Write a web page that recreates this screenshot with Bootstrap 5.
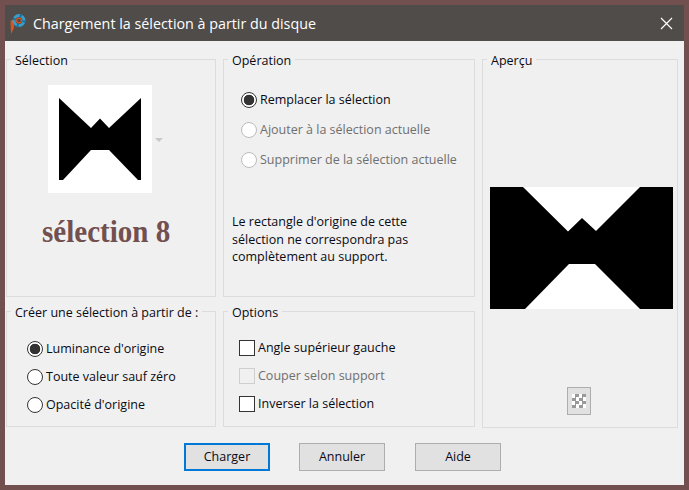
<!DOCTYPE html>
<html lang="fr">
<head>
  <meta charset="UTF-8" />
  <meta name="viewport" content="width=device-width, initial-scale=1" />
  <title>Chargement la sélection</title>
  <link href="https://cdn.jsdelivr.net/npm/bootstrap@5.3.3/dist/css/bootstrap.min.css" rel="stylesheet" />
  <style>
    body {
      background: #735050;
      margin: 0;
      font-family: "Open Sans", "Noto Sans", sans-serif;
      font-size: 12.5px;
      color: #0a0a14;
    }

    .dlg-window {
      width: 679px;
      height: 480px;
      margin: 5px;
      background: #f0f0f0;
    }

    .dlg-title {
      height: 36px;
      background: #4f4c4a;
      color: #fff;
      font-size: 14.3px;
      padding: 2px 0 0 5px;
    }

    .dlg-logo { margin-right: 7px; }
    .dlg-close { margin: -2px 11px 0 0; }

    .dlg-grid {
      display: grid;
      grid-template-columns: 210px 252px 196px;
      grid-template-rows: 247px 125px;
      column-gap: 7px;
      row-gap: 5px;
      padding: 9px 0 0 1px;
    }

    .grp {
      border: 1px solid #dcdcdc;
      min-width: 0;
      margin: 0;
      padding: 0;
    }

    .grp legend {
      float: none;
      width: auto;
      height: 18px;
      margin: 0 0 0 4px;
      padding: 0 4px;
      font-size: 12.5px;
      line-height: 21px;
    }

    .grp-preview { grid-column: 3; grid-row: 1 / span 2; margin-bottom: -1px; }

    .thumb-row { margin: 17px 0 0 41px; }
    .thumb-box { width: 104px; height: 108px; background: #fff; }
    .thumb-arrow {
      width: 0;
      height: 0;
      margin: 53px 0 0 3px;
      border-left: 4px solid transparent;
      border-right: 4px solid transparent;
      border-top: 4px solid #c8c8c8;
    }

    .sel-name {
      display: inline-block;
      margin: 19px 0 0 35px;
      font-family: "Liberation Serif", serif;
      font-weight: 700;
      font-size: 32px;
      line-height: 38px;
      color: #735050;
      white-space: nowrap;
      transform: scaleX(.908);
      transform-origin: left center;
    }

    .opt-list { display: flex; flex-direction: column; }
    .opt-list .form-check {
      display: flex;
      align-items: center;
      min-height: 0;
      margin: 0;
      padding: 0;
      height: 28px;
      gap: 3px;
    }
    .list-op { margin: 18px 0 0 17px; height: 90px; gap: 2px; }
    .list-src { margin: 15px 0 0 20px; }
    .list-opts { margin: 14px 0 0 15px; }

    .opt-list .form-check-input {
      float: none;
      flex: none;
      margin: 0;
      width: 16px;
      height: 16px;
      background-color: #fff;
      border: 1px solid #333;
      box-shadow: none;
    }
    .opt-list .form-check-input[type=radio] { border-radius: 50%; }
    .opt-list .form-check-input[type=checkbox] { border-radius: 0; }
    .opt-list .form-check-input:checked {
      background-color: #fff;
      border-color: #333;
      background-image: radial-gradient(circle, #333 0 5px, #fff 5.6px);
    }
    .opt-list .form-check-input:disabled {
      opacity: 1;
      border-color: #bcbcbc;
    }
    .opt-list .form-check-input[type=checkbox]:disabled { border-color: #cfcfcf; background-color: #f0f0f0; }
    .opt-list .form-check-label { opacity: 1; color: inherit; white-space: nowrap; }
    .opt-list .form-check-input:disabled ~ .form-check-label { opacity: 1; color: #6f6f6f; }

    .note-text {
      margin: 37px 0 0 8px;
      width: 200px;
      line-height: 17.5px;
    }

    .preview-box { width: 183px; height: 122px; margin: 119px 0 0 7px; background: #000; }
    .preview-btn {
      width: 24px;
      height: 28px;
      margin: 78px 0 0 84px;
      background: #e1e1e1;
      border: 1px solid #adadad;
    }
    .checker {
      width: 14px;
      height: 14px;
      background: repeating-conic-gradient(#999 0 25%, #fff 0 50%) 0 0 / 7px 7px;
    }

    .dlg-actions { padding: 16px 0 0 179px; gap: 29px; }
    .dlg-btn {
      width: 86px;
      height: 28px;
      padding: 1px 0 0;
      border-radius: 0;
      background: #e1e1e1;
      border: 1px solid #adadad;
      color: #0a0a14;
      font-size: 12.5px;
    }
    .dlg-btn-default { border: 2px solid #0078d7; }
    .dlg-btn-last { margin-left: 1px; }
  </style>
</head>
<body>

  <div class="dlg-window">
    <!-- Title bar -->
    <div class="dlg-title d-flex align-items-center">
      <svg class="dlg-logo flex-shrink-0" width="16" height="20" viewBox="0 0 16 20">
        <path d="M0.5 7 L4 4.5 L4 14 L1 20 Z" fill="#d9541e" />
        <circle cx="9" cy="6.5" r="5" fill="none" stroke="#37a0cc" stroke-width="3" />
        <circle cx="9" cy="6.5" r="5" fill="none" stroke="#1b6f9c" stroke-width="3" stroke-dasharray="2 5.9" />
        <circle cx="9" cy="6.5" r="2.4" fill="#4f4c4a" stroke="#d9541e" stroke-width="1.2" />
      </svg>
      <span class="flex-grow-1">Chargement la sélection à partir du disque</span>
      <svg class="dlg-close" width="13" height="13" viewBox="0 0 13 13">
        <path d="M1 1 L12 12 M12 1 L1 12" stroke="#fff" stroke-width="1.2" fill="none" />
      </svg>
    </div>

    <div class="dlg-grid">
      <fieldset class="grp">
        <legend>Sélection</legend>
        <div class="thumb-row d-flex">
          <div class="thumb-box">
            <svg width="104" height="108" viewBox="0 0 104 108" class="d-block">
              <polygon points="11,13 43,43 52,33.5 61,43 93,13 93,95 90,95 61,65 43,65 15,95 11,95" fill="#000" />
            </svg>
          </div>
          <div class="thumb-arrow"></div>
        </div>
        <div class="sel-name">sélection 8</div>
      </fieldset>

      <fieldset class="grp">
        <legend>Opération</legend>
        <div class="opt-list list-op">
          <div class="form-check">
            <input class="form-check-input" type="radio" name="op" id="op1" checked />
            <label class="form-check-label" for="op1">Remplacer la sélection</label>
          </div>
          <div class="form-check">
            <input class="form-check-input" type="radio" name="op" id="op2" disabled />
            <label class="form-check-label" for="op2">Ajouter à la sélection actuelle</label>
          </div>
          <div class="form-check">
            <input class="form-check-input" type="radio" name="op" id="op3" disabled />
            <label class="form-check-label" for="op3">Supprimer de la sélection actuelle</label>
          </div>
        </div>
        <p class="note-text mb-0">Le rectangle d'origine de cette sélection ne correspondra pas complètement au support.</p>
      </fieldset>

      <fieldset class="grp grp-preview">
        <legend>Aperçu</legend>
        <div class="preview-box">
          <svg width="183" height="122" viewBox="0 0 183 122" class="d-block">
            <polygon points="33,0 150,0 106,44 92,31 78,44.5" fill="#fff" />
            <polygon points="79,77 105,77 150,122 35,122" fill="#fff" />
          </svg>
        </div>
        <div class="preview-btn d-flex align-items-center justify-content-center">
          <div class="checker"></div>
        </div>
      </fieldset>

      <fieldset class="grp">
        <legend>Créer une sélection à partir de :</legend>
        <div class="opt-list list-src">
          <div class="form-check">
            <input class="form-check-input" type="radio" name="src" id="src1" checked />
            <label class="form-check-label" for="src1">Luminance d'origine</label>
          </div>
          <div class="form-check">
            <input class="form-check-input" type="radio" name="src" id="src2" />
            <label class="form-check-label" for="src2">Toute valeur sauf zéro</label>
          </div>
          <div class="form-check">
            <input class="form-check-input" type="radio" name="src" id="src3" />
            <label class="form-check-label" for="src3">Opacité d'origine</label>
          </div>
        </div>
      </fieldset>

      <fieldset class="grp">
        <legend>Options</legend>
        <div class="opt-list list-opts">
          <div class="form-check">
            <input class="form-check-input" type="checkbox" id="o1" />
            <label class="form-check-label" for="o1">Angle supérieur gauche</label>
          </div>
          <div class="form-check">
            <input class="form-check-input" type="checkbox" id="o2" disabled />
            <label class="form-check-label" for="o2">Couper selon support</label>
          </div>
          <div class="form-check">
            <input class="form-check-input" type="checkbox" id="o3" />
            <label class="form-check-label" for="o3">Inverser la sélection</label>
          </div>
        </div>
      </fieldset>
    </div>

    <div class="dlg-actions d-flex">
      <button type="button" class="btn dlg-btn dlg-btn-default">Charger</button>
      <button type="button" class="btn dlg-btn">Annuler</button>
      <button type="button" class="btn dlg-btn dlg-btn-last">Aide</button>
    </div>
  </div>

  <script src="https://cdn.jsdelivr.net/npm/bootstrap@5.3.3/dist/js/bootstrap.bundle.min.js"></script>
</body>
</html>
